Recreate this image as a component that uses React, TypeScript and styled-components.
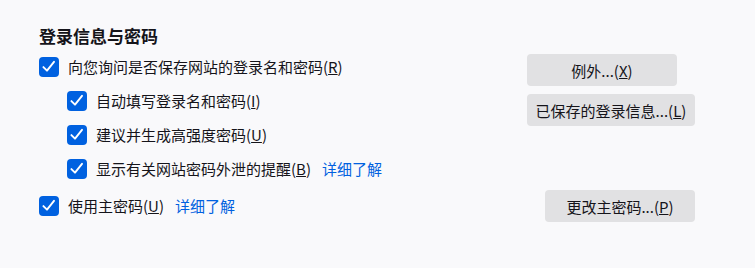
import React from "react";
import styled, { createGlobalStyle } from "styled-components";

const Global = createGlobalStyle`
  html, body { margin: 0; padding: 0; background: #f9f9fb; }
  body {
    font-family: "Noto Sans CJK SC", "Noto Sans", sans-serif;
    font-size: 15px;
    color: #15141a;
  }
`;

const Page = styled.div`
  width: 755px;
  height: 268px;
  box-sizing: border-box;
  padding: 24px 60px 0 39px;
  background: #f9f9fb;
`;

const Heading = styled.h2`
  margin: 0 0 2px 0;
  font-size: 17px;
  font-weight: 700;
  line-height: 24px;
`;

const TopBox = styled.div`
  display: flex;
  justify-content: space-between;
  align-items: flex-start;
`;

const Options = styled.div`
  display: flex;
  flex-direction: column;
`;

const Row = styled.div<{ $indent?: boolean; $height?: number }>`
  display: flex;
  align-items: center;
  height: ${(p) => p.$height ?? 34}px;
  padding-left: ${(p) => (p.$indent ? 28 : 0)}px;
`;

const Box = styled.span`
  width: 20px;
  height: 20px;
  border-radius: 4px;
  background: #0061e0;
  display: inline-flex;
  align-items: center;
  justify-content: center;
  flex: none;
`;

const Label = styled.span`
  margin-left: 9px;
  line-height: 20px;
  white-space: nowrap;
`;

const Link = styled.a`
  margin-left: 11px;
  color: #0061e0;
  text-decoration: none;
  line-height: 20px;
  white-space: nowrap;
`;

const Buttons = styled.div`
  display: flex;
  flex-direction: column;
  align-items: flex-start;
  gap: 8px;
  width: 168px;
  padding-top: 4px;
`;

const Button = styled.button<{ $width: number }>`
  width: ${(p) => p.$width}px;
  height: 32px;
  border: none;
  border-radius: 4px;
  background: #e1e1e3;
  color: #15141a;
  font-family: "Noto Sans CJK SC", "Noto Sans", sans-serif;
  font-size: 15px;
  padding: 0;
  white-space: nowrap;
`;

const BottomRow = styled.div`
  display: flex;
  justify-content: space-between;
  align-items: center;
  margin-top: 4px;
  height: 32px;
`;

const Check = () => (
  <Box>
    <svg width="14" height="14" viewBox="0 0 14 14">
      <path d="M1.4 7.1 L5 10.7 L12 1.8" fill="none" stroke="#fff" strokeWidth="1.9" strokeLinecap="round" strokeLinejoin="round" />
    </svg>
  </Box>
);

export default function App() {
  return (
    <>
      <Global />
      <Page>
        <Heading>登录信息与密码</Heading>
        <TopBox>
          <Options>
            <Row>
              <Check />
              <Label>向您询问是否保存网站的登录名和密码(<u>R</u>)</Label>
            </Row>
            <Row $indent>
              <Check />
              <Label>自动填写登录名和密码(<u>I</u>)</Label>
            </Row>
            <Row $indent>
              <Check />
              <Label>建议并生成高强度密码(<u>U</u>)</Label>
            </Row>
            <Row $indent>
              <Check />
              <Label>显示有关网站密码外泄的提醒(<u>B</u>)</Label>
              <Link href="#">详细了解</Link>
            </Row>
          </Options>
          <Buttons>
            <Button $width={150}>例外...(<u>X</u>)</Button>
            <Button $width={168}>已保存的登录信息...(<u>L</u>)</Button>
          </Buttons>
        </TopBox>
        <BottomRow>
          <Row $height={32}>
            <Check />
            <Label>使用主密码(<u>U</u>)</Label>
            <Link href="#">详细了解</Link>
          </Row>
          <Button $width={150}>更改主密码...(<u>P</u>)</Button>
        </BottomRow>
      </Page>
    </>
  );
}
